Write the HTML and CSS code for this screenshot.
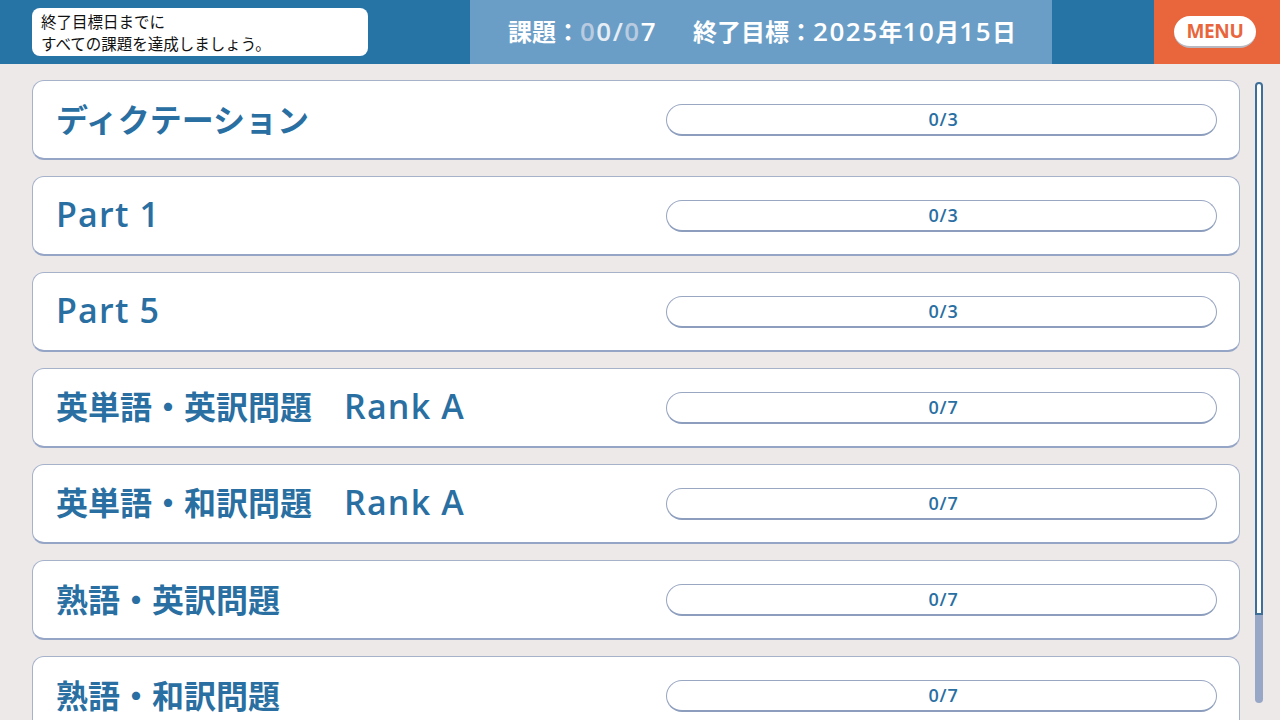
FILE: index.html
```html
<!DOCTYPE html>
<html lang="ja">
<head>
<meta charset="utf-8">
<link rel="stylesheet" href="styles.css">
</head>
<body>
<header class="topbar">
  <div class="left">
    <div class="bubble">終了目標日までに<br>すべての課題を達成しましょう。</div>
  </div>
  <div class="status">
    <span>課題：<span class="num"><span class="dim">0</span><span class="semi">0/</span><span class="dim">0</span>7</span></span>
    <span class="goal">終了目標：<span class="num">2025</span>年<span class="num">10</span>月<span class="num">15</span>日</span>
  </div>
  <div class="spacer"></div>
  <div class="menuwrap"><div class="menu">MENU</div></div>
</header>
<main class="main">
  <div class="list">
    <div class="card"><div class="title">ディクテーション</div><div class="prog">0/3</div></div>
    <div class="card"><div class="title"><span class="lat">Part 1</span></div><div class="prog">0/3</div></div>
    <div class="card"><div class="title"><span class="lat">Part 5</span></div><div class="prog">0/3</div></div>
    <div class="card"><div class="title">英単語・英訳問題　<span class="lat">Rank A</span></div><div class="prog">0/7</div></div>
    <div class="card"><div class="title">英単語・和訳問題　<span class="lat">Rank A</span></div><div class="prog">0/7</div></div>
    <div class="card"><div class="title">熟語・英訳問題</div><div class="prog">0/7</div></div>
    <div class="card"><div class="title">熟語・和訳問題</div><div class="prog">0/7</div></div>
  </div>
  <div class="scroll">
    <div class="track"></div>
    <div class="thumb"></div>
  </div>
</main>
</body>
</html>
```
FILE: styles.css
```css
* { box-sizing: border-box; }
html, body { margin: 0; padding: 0; }
body {
  width: 1280px;
  height: 720px;
  overflow: hidden;
  background: #ece9e8;
  font-family: "Noto Sans CJK JP", "Noto Sans", sans-serif;
}
.topbar {
  display: flex;
  height: 64px;
  background: #2673a6;
}
.left {
  width: 470px;
  padding: 8px 0 0 32px;
}
.bubble {
  width: 336px;
  height: 48px;
  background: #fff;
  border-radius: 8px;
  padding: 2px 9px;
  font-size: 15.5px;
  line-height: 22px;
  color: #111;
}
.status {
  width: 582px;
  background: #6a9ec6;
  display: flex;
  align-items: center;
  justify-content: center;
  gap: 36px;
  color: #fff;
  font-weight: 700;
  font-size: 24px;
  padding-left: 2px;
  padding-bottom: 2px;
}
.num {
  font-family: "Open Sans", "Noto Sans", sans-serif;
  font-weight: 600;
  font-size: 26px;
  letter-spacing: 1.5px;
}
.dim { color: #b9cbe0; }
.semi { color: #e6edf5; }
.spacer { width: 102px; }
.menuwrap {
  width: 126px;
  background: #e9653c;
  display: flex;
  align-items: center;
  justify-content: center;
  padding-right: 4px;
}
.menu {
  width: 82px;
  height: 32px;
  background: #fff;
  border-radius: 16px;
  border-bottom: 2px solid #b8b8c0;
  color: #e9653c;
  font-family: "Open Sans", sans-serif;
  font-weight: 700;
  font-size: 19px;
  letter-spacing: -0.3px;
  display: flex;
  align-items: center;
  justify-content: center;
}
.main {
  display: flex;
  height: 656px;
  overflow: hidden;
}
.list {
  width: 1240px;
  padding: 16px 0 0 32px;
  display: flex;
  flex-direction: column;
  gap: 16px;
}
.card {
  flex: none;
  height: 80px;
  background: #fff;
  border: 1px solid #a6b1ca;
  border-bottom: 2px solid #95a5c6;
  border-radius: 12px;
  display: flex;
  align-items: center;
  justify-content: space-between;
  padding: 0 22px 0 23px;
}
.title {
  color: #2a6fa2;
  font-family: "Noto Sans CJK JP", sans-serif;
  font-weight: 700;
  font-size: 32px;
  line-height: 40px;
  padding-bottom: 4px;
}
.lat {
  font-family: "Open Sans", sans-serif;
  font-weight: 600;
  font-size: 34px;
  letter-spacing: 1.2px;
}
.prog {
  width: 551px;
  height: 32px;
  border: 1px solid #9aa7c2;
  border-bottom: 2px solid #8c9dbd;
  border-radius: 16px;
  display: flex;
  align-items: center;
  justify-content: center;
  color: #2a6fa2;
  font-family: "Open Sans", sans-serif;
  font-size: 18px;
  font-weight: 600;
  letter-spacing: 0.8px;
  padding-left: 4px;
}
.scroll {
  width: 40px;
  padding: 18px 0 0 15px;
  display: flex;
  flex-direction: column;
}
.track {
  width: 8px;
  height: 533px;
  background: #fff;
  border: 2px solid #3d6f98;
  border-radius: 4px 4px 0 0;
}
.thumb {
  width: 8px;
  height: 88px;
  background: #98a7c6;
  border-radius: 0 0 4px 4px;
}
```
